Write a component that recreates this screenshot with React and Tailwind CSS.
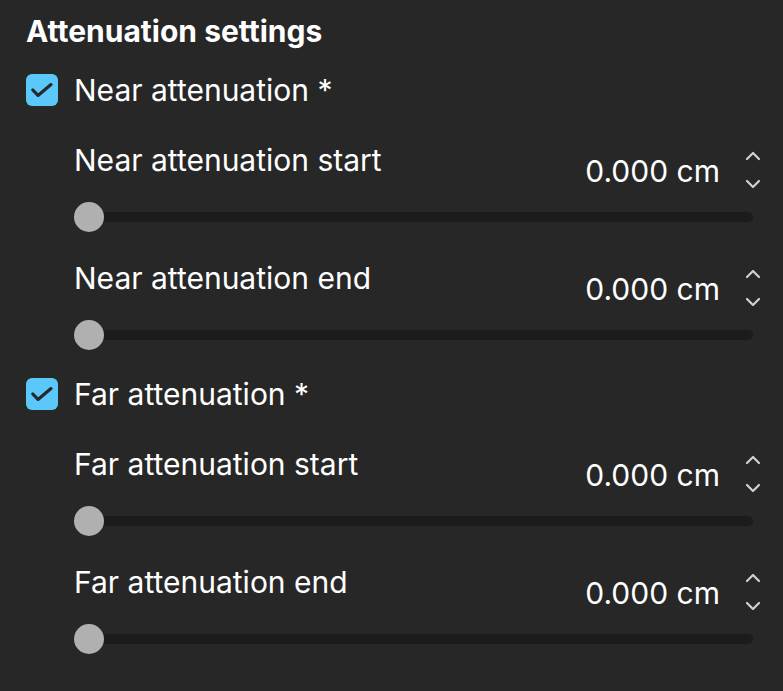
import React from 'react';

const font = { fontFamily: 'Inter, "Noto Sans", sans-serif' };

function Check() {
    return (
        <div className="w-8 h-8 rounded-[6px] bg-[#5ac8fa] flex items-center justify-center shrink-0">
            <svg width="32" height="32" viewBox="0 0 32 32" fill="none">
                <path d="M6.8 16l5.2 5.4L25 10.6" stroke="#26282b" strokeWidth="3.2" strokeLinecap="round" strokeLinejoin="round" />
            </svg>
        </div>
    );
}

function Spinner() {
    return (
        <div className="flex flex-col items-center gap-[18px] w-4 ml-[25px] mt-[9px]">
            <svg width="16" height="10" viewBox="0 0 16 10" fill="none">
                <path d="M2 8l6-6 6 6" stroke="#d0d0d0" strokeWidth="2.2" strokeLinecap="round" strokeLinejoin="round" />
            </svg>
            <svg width="16" height="10" viewBox="0 0 16 10" fill="none">
                <path d="M2 2l6 6 6-6" stroke="#d0d0d0" strokeWidth="2.2" strokeLinecap="round" strokeLinejoin="round" />
            </svg>
        </div>
    );
}

function Row({ label }) {
    return (
        <div className="pl-[48px] mb-[28px]">
            <div className="flex items-start justify-between h-[60px] pr-[22px]">
                <span className="text-[30px] leading-[36px] text-white">{label}</span>
                <div className="flex items-start">
                    <span className="text-[30px] leading-[36px] text-white mt-[11px]">0.000 cm</span>
                    <Spinner />
                </div>
            </div>
            <div className="relative h-[30px] flex items-center mr-[30px]">
                <div className="w-full h-[10px] rounded-full bg-[#1c1c1c]" />
                <div className="absolute left-0 w-[30px] h-[30px] rounded-full bg-[#b0b0b0]" />
            </div>
        </div>
    );
}

function Group({ title, rows, className = '' }) {
    return (
        <div className={className}>
            <div className="flex items-center gap-[16px] h-[32px] mb-[36px]">
                <Check />
                <span className="text-[30px] text-white leading-[36px]">{title}</span>
            </div>
            {rows.map((r) => <Row key={r} label={r} />)}
        </div>
    );
}

export default function App() {
    return (
        <div className="w-[783px] h-[691px] bg-[#272727] pl-[26px] pt-[13px] overflow-hidden" style={font}>
            <h2 className="text-[30px] font-bold text-white leading-[36px] mb-[25px]">Attenuation settings</h2>
            <Group title="Near attenuation *" rows={["Near attenuation start", "Near attenuation end"]} />
            <Group className="mt-[4px]" title="Far attenuation *" rows={["Far attenuation start", "Far attenuation end"]} />
        </div>
    );
}
